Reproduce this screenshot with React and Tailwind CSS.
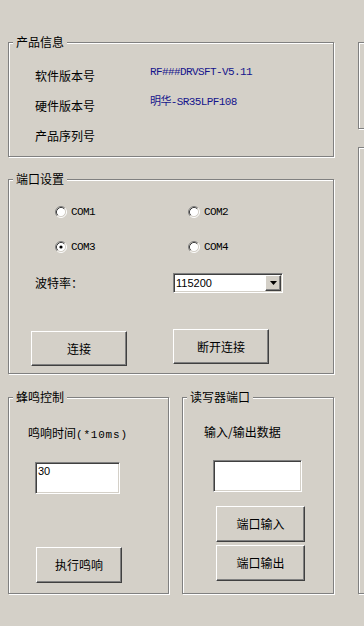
import React from "react";

const cjk = { fontFamily: '"Noto Sans CJK SC", "Noto Sans", sans-serif' };
const mono = { fontFamily: '"Liberation Mono", "Noto Sans CJK SC", monospace' };
const sans = { fontFamily: '"Liberation Sans", Arial, sans-serif' };

const GroupBox = ({ title, className = "", children }) => (
  <div
    className={`relative border border-[#808080] shadow-[inset_1px_1px_0_#fff,1px_1px_0_#fff] ${className}`}
  >
    {title && (
      <span
        className="absolute left-[4px] -top-[7px] bg-[#d4d0c8] px-[3px] text-[12px] leading-[12px] text-black"
        style={cjk}
      >
        {title}
      </span>
    )}
    {children}
  </div>
);

const Button = ({ label, className = "" }) => (
  <button
    className={`flex items-center justify-center bg-[#d4d0c8] border border-t-white border-l-white border-r-[#404040] border-b-[#404040] shadow-[inset_-1px_-1px_0_#808080] text-[12px] leading-[12px] text-black ${className}`}
    style={cjk}
  >
    {label}
  </button>
);

const Field = ({ value = "", className = "" }) => (
  <div
    className={`bg-white border border-t-[#808080] border-l-[#808080] border-b-white border-r-white shadow-[inset_1px_1px_0_#404040,inset_-1px_-1px_0_#d4d0c8] pl-[2px] pt-[2px] text-[11px] leading-[12px] text-black ${className}`}
    style={sans}
  >
    {value}
  </div>
);

const Radio = ({ label, checked }) => (
  <div className="flex items-center gap-[4px] w-[133px]">
    <svg width="12" height="12" viewBox="0 0 12 12">
      <circle cx="6" cy="6" r="4.5" fill="#fff" />
      <path d="M2.11 9.89 A5.5 5.5 0 0 1 9.89 2.11" fill="none" stroke="#808080" />
      <path d="M9.89 2.11 A5.5 5.5 0 0 1 2.11 9.89" fill="none" stroke="#fff" />
      <path d="M2.82 9.18 A4.5 4.5 0 0 1 9.18 2.82" fill="none" stroke="#404040" />
      <path d="M9.18 2.82 A4.5 4.5 0 0 1 2.82 9.18" fill="none" stroke="#d4d0c8" />
      {checked && <circle cx="6" cy="6" r="1.6" fill="#000" />}
    </svg>
    <span className="text-[11px] leading-[12px] tracking-[-0.6px] text-black" style={mono}>
      {label}
    </span>
  </div>
);

const Combo = ({ value }) => (
  <div className="flex items-center w-[110px] h-[20px] bg-white border border-t-[#808080] border-l-[#808080] border-b-white border-r-white shadow-[inset_1px_1px_0_#404040,inset_-1px_-1px_0_#d4d0c8] p-[1px]">
    <span className="flex-1 pl-[1px] text-[11px] leading-[12px] text-black" style={sans}>
      {value}
    </span>
    <div className="flex items-center justify-center w-[16px] h-[16px] bg-[#d4d0c8] border border-t-white border-l-white border-r-[#404040] border-b-[#404040] shadow-[inset_-1px_-1px_0_#808080]">
      <svg width="7" height="4" viewBox="0 0 7 4">
        <path d="M0 0 H7 L3.5 4 Z" fill="#000" />
      </svg>
    </div>
  </div>
);

export default function App() {
  return (
    <div className="w-[364px] h-[626px] bg-[#d4d0c8] overflow-hidden flex pl-[8px] pt-[42px] gap-[24px]">
      <div className="flex flex-col w-[326px] shrink-0">
        <GroupBox title="产品信息" className="h-[115px] pl-[26px] pt-[18px]">
          {[
            ["软件版本号", "RF###DRVSFT-V5.11"],
            ["硬件版本号", "明华-SR35LPF108"],
            ["产品序列号", ""],
          ].map(([label, value]) => (
            <div key={label} className="flex items-start h-[30px]">
              <span className="w-[115px] pt-[9px] text-[12px] leading-[12px] text-black" style={cjk}>
                {label}
              </span>
              <span className="pt-[5px] text-[11px] leading-[12px] tracking-[-0.6px] text-[#14148c]" style={mono}>
                {value}
              </span>
            </div>
          ))}
        </GroupBox>

        <GroupBox title="端口设置" className="mt-[22px] h-[195px] pl-[22px] pt-[22px]">
          <div className="flex flex-col gap-[15px] ml-[24px]">
            <div className="flex h-[20px] items-center">
              <Radio label="COM1" />
              <Radio label="COM2" />
            </div>
            <div className="flex h-[20px] items-center">
              <Radio label="COM3" checked />
              <Radio label="COM4" />
            </div>
          </div>
          <div className="flex items-center mt-[16px] ml-[4px]">
            <span className="w-[138px] text-[12px] leading-[12px] text-black" style={cjk}>
              波特率：
            </span>
            <Combo value="115200" />
          </div>
          <div className="flex items-start gap-[46px] mt-[36px]">
            <Button label="连接" className="w-[96px] h-[35px] mt-[2px]" />
            <Button label="断开连接" className="w-[96px] h-[35px]" />
          </div>
        </GroupBox>

        <div className="flex gap-[13px] mt-[23px]">
          <GroupBox title="蜂鸣控制" className="w-[161px] h-[197px] pl-[19px] pt-[29px]">
            <div className="text-[12px] leading-[12px] text-black" style={cjk}>
              鸣响时间<span className="text-[11px] tracking-[0.8px]" style={mono}>(*10ms)</span>
            </div>
            <Field value="30" className="w-[85px] h-[32px] mt-[21px] ml-[7px]" />
            <Button label="执行鸣响" className="w-[86px] h-[36px] mt-[53px] ml-[8px]" />
          </GroupBox>
          <GroupBox title="读写器端口" className="w-[152px] h-[197px] pl-[21px] pt-[28px]">
            <div className="text-[12px] leading-[12px] text-black" style={cjk}>
              输入/输出数据
            </div>
            <Field className="w-[89px] h-[32px] mt-[22px] ml-[9px]" />
            <Button label="端口输入" className="w-[89px] h-[36px] mt-[14px] ml-[12px]" />
            <Button label="端口输出" className="w-[89px] h-[36px] mt-[3px] ml-[12px]" />
          </GroupBox>
        </div>
      </div>

      <div className="flex flex-col w-[40px] shrink-0">
        <GroupBox className="h-[87px]" />
        <GroupBox className="mt-[18px] h-[447px]" />
      </div>
    </div>
  );
}
